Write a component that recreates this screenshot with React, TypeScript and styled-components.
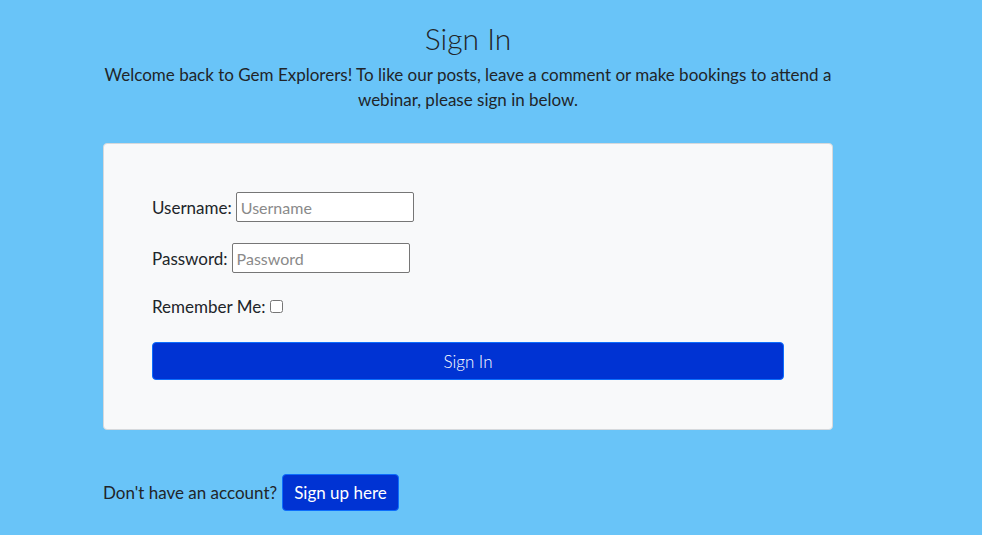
import React from "react";
import styled, { createGlobalStyle } from "styled-components";

const Global = createGlobalStyle`
  html, body { margin: 0; padding: 0; }
  body {
    background: #69c4f8;
    font-family: "Lato", "Noto Sans", sans-serif;
    color: #212529;
    font-size: 17px;
  }
`;

const Page = styled.main`
  width: 730px;
  margin-left: 103px;
  padding-top: 20px;
`;

const Title = styled.h1`
  margin: 0;
  text-align: center;
  font-weight: 300;
  font-size: 30px;
  line-height: 36px;
`;

const Intro = styled.p`
  margin: 6px 0 0;
  text-align: center;
  line-height: 25px;
`;

const Card = styled.div`
  margin-top: 31px;
  background: #f8f9fa;
  border: 1px solid #d6d9dc;
  border-radius: 4px;
  padding: 48px 48px 49px;
`;

const Row = styled.div<{ $last?: boolean }>`
  margin: 0 0 ${(p) => (p.$last ? "24px" : "21px")};
  display: flex;
  align-items: center;
  height: ${(p) => (p.$last ? "24px" : "30px")};
`;

const Label = styled.label`
  margin-right: 4px;
`;

const Input = styled.input`
  box-sizing: border-box;
  width: 178px;
  height: 30px;
  border: 1px solid #767676;
  border-radius: 2px;
  padding: 1px 4px;
  font-family: inherit;
  font-size: 16px;
  color: #212529;
  background: #fff;
  &::placeholder { color: #8a8a8a; }
`;

const Check = styled.input`
  margin: 0 0 0 1px;
  width: 13px;
  height: 13px;
`;

const PrimaryButton = styled.button<{ $block?: boolean }>`
  box-sizing: border-box;
  background: #0033d3;
  border: 1px solid #0d6efd;
  border-radius: 4px;
  color: #fff;
  font-family: inherit;
  font-size: 17px;
  font-weight: ${(p) => (p.$block ? 300 : 400)};
  height: ${(p) => (p.$block ? "38px" : "37px")};
  width: ${(p) => (p.$block ? "100%" : "auto")};
  padding: 0 11px;
  cursor: pointer;
`;

const FormBody = styled.form`
  width: 632px;
  display: flex;
  flex-direction: column;
`;

const Footer = styled.div`
  margin-top: 44px;
  display: flex;
  align-items: center;
  gap: 5px;
`;

export default function App() {
  return (
    <>
      <Global />
      <Page>
        <Title>Sign In</Title>
        <Intro>
          Welcome back to Gem Explorers! To like our posts, leave a comment or make bookings to attend a
          webinar, please sign in below.
        </Intro>
        <Card>
          <FormBody onSubmit={(e) => e.preventDefault()}>
            <Row>
              <Label htmlFor="u">Username:</Label>
              <Input id="u" placeholder="Username" />
            </Row>
            <Row>
              <Label htmlFor="p">Password:</Label>
              <Input id="p" type="password" placeholder="Password" />
            </Row>
            <Row $last>
              <Label htmlFor="r">Remember Me:</Label>
              <Check id="r" type="checkbox" />
            </Row>
            <PrimaryButton $block type="submit">Sign In</PrimaryButton>
          </FormBody>
        </Card>
        <Footer>
          <span>Don't have an account?</span>
          <PrimaryButton type="button">Sign up here</PrimaryButton>
        </Footer>
      </Page>
    </>
  );
}
